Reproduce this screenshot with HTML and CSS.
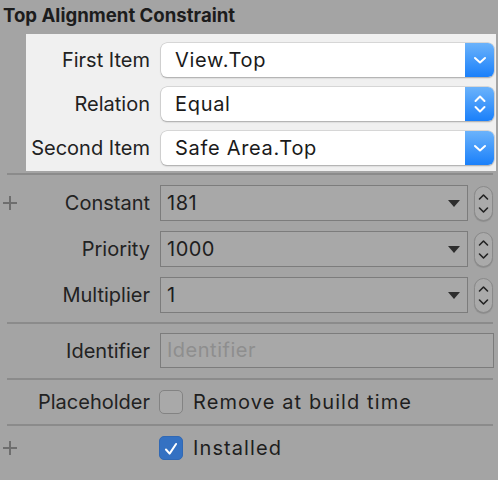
FILE: index.html
```html
<!DOCTYPE html>
<html>
<head>
<meta charset="utf-8">
<link rel="stylesheet" href="styles.css">
</head>
<body>
<div class="panel">
  <div class="title">Top Alignment Constraint</div>
  <div class="hl">
    <div class="row">
      <div class="label">First Item</div>
      <div class="popup"><span class="ptext">View.Top</span>
        <span class="pbtn"><svg width="14" height="10" viewBox="0 0 14 10"><path d="M2 3 L7 7.5 L12 3" fill="none" stroke="#fff" stroke-width="2" stroke-linecap="round" stroke-linejoin="round"/></svg></span>
      </div>
    </div>
    <div class="row">
      <div class="label">Relation</div>
      <div class="popup"><span class="ptext">Equal</span>
        <span class="pbtn"><svg width="14" height="22" viewBox="0 0 14 22"><path d="M2.5 8 L7 3.5 L11.5 8 M2.5 14 L7 18.5 L11.5 14" fill="none" stroke="#fff" stroke-width="2" stroke-linecap="round" stroke-linejoin="round"/></svg></span>
      </div>
    </div>
    <div class="row">
      <div class="label">Second Item</div>
      <div class="popup"><span class="ptext">Safe Area.Top</span>
        <span class="pbtn"><svg width="14" height="10" viewBox="0 0 14 10"><path d="M2 3 L7 7.5 L12 3" fill="none" stroke="#fff" stroke-width="2" stroke-linecap="round" stroke-linejoin="round"/></svg></span>
      </div>
    </div>
  </div>
  <div class="divider first"></div>
  <div class="group g1">
    <div class="row2 plusrow">
      <span class="plus"></span>
      <div class="label">Constant</div>
      <div class="combo"><span class="ctext">181</span><span class="tri"></span></div>
      <div class="stepper"><svg width="19" height="35" viewBox="0 0 19 35"><path d="M5.5 13 L9.5 9 L13.5 13 M5.5 22 L9.5 26 L13.5 22" fill="none" stroke="#222" stroke-width="1.6" stroke-linecap="round" stroke-linejoin="round"/></svg></div>
    </div>
    <div class="row2">
      <div class="label">Priority</div>
      <div class="combo"><span class="ctext">1000</span><span class="tri"></span></div>
      <div class="stepper"><svg width="19" height="35" viewBox="0 0 19 35"><path d="M5.5 13 L9.5 9 L13.5 13 M5.5 22 L9.5 26 L13.5 22" fill="none" stroke="#222" stroke-width="1.6" stroke-linecap="round" stroke-linejoin="round"/></svg></div>
    </div>
    <div class="row2">
      <div class="label">Multiplier</div>
      <div class="combo"><span class="ctext">1</span><span class="tri"></span></div>
      <div class="stepper"><svg width="19" height="35" viewBox="0 0 19 35"><path d="M5.5 13 L9.5 9 L13.5 13 M5.5 22 L9.5 26 L13.5 22" fill="none" stroke="#222" stroke-width="1.6" stroke-linecap="round" stroke-linejoin="round"/></svg></div>
    </div>
  </div>
  <div class="divider"></div>
  <div class="group g2">
    <div class="row2">
      <div class="label">Identifier</div>
      <div class="textfield">Identifier</div>
    </div>
  </div>
  <div class="divider"></div>
  <div class="row3">
    <div class="label">Placeholder</div>
    <span class="check"></span>
    <span class="ctext2">Remove at build time</span>
  </div>
  <div class="divider"></div>
  <div class="row3 plusrow">
    <span class="plus"></span>
    <div class="label"></div>
    <span class="check on"><svg width="24" height="24" viewBox="0 0 24 24"><path d="M6.5 12.5 L10.5 17 L17.5 6.5" fill="none" stroke="#fff" stroke-width="2.2" stroke-linecap="round" stroke-linejoin="round"/></svg></span>
    <span class="ctext2">Installed</span>
  </div>
</div>
</body>
</html>
```
FILE: styles.css
```css
html, body {
  margin: 0;
  padding: 0;
  background: #a4a4a4;
}
body {
  width: 498px;
  height: 480px;
  overflow: hidden;
  font-family: Inter, "Liberation Sans", sans-serif;
  color: #1e1e1e;
}
.panel {
  display: flex;
  flex-direction: column;
}
.title {
  height: 34px;
  box-sizing: border-box;
  padding: 3px 0 0 3px;
  font-weight: 700;
  font-size: 18.6px;
  line-height: 24px;
  color: #1c1c1c;
}
.hl {
  margin-left: 26px;
  width: 470px;
  background: #f0f0f0;
  box-sizing: border-box;
  padding: 9px 0 6px 0;
  display: flex;
  flex-direction: column;
  gap: 10px;
}
.row {
  display: flex;
  align-items: center;
  height: 34px;
}
.label {
  width: 150px;
  flex: none;
  text-align: right;
  font-size: 20px;
  margin-right: 10px;
  color: #222;
}
.hl .label {
  width: 124px;
  margin-right: 11px;
}
.popup {
  width: 333px;
  height: 34px;
  box-sizing: border-box;
  background: #fff;
  border-radius: 6px;
  box-shadow: 0 0 0 0.5px #bdbdbd, 0 1px 1.5px rgba(0,0,0,0.35);
  display: flex;
  align-items: center;
  overflow: hidden;
}
.ptext {
  flex: 1;
  padding-left: 14px;
  font-size: 20px;
  letter-spacing: 0.7px;
  color: #1a1a1a;
}
.pbtn {
  width: 29px;
  height: 100%;
  background: linear-gradient(#6bb3fb, #1a80fa);
  display: flex;
  align-items: center;
  justify-content: center;
}
.divider {
  height: 2px;
  background: #8b8b8b;
  margin: 0 5px 0 7px;
}
.divider.first {
  margin-top: 2px;
}
.group {
  display: flex;
  flex-direction: column;
  gap: 10px;
}
.g1 { padding: 10px 0 9px 0; }
.g2 { padding: 9px 0 10px 0; }
.row2 {
  display: flex;
  align-items: center;
  height: 36px;
  position: relative;
}
.g2 .row2 { height: 35px; }
.combo {
  width: 308px;
  height: 36px;
  box-sizing: border-box;
  border: 1px solid #7c7c7c;
  background: #a8a8a8;
  display: flex;
  align-items: center;
}
.ctext {
  flex: 1;
  padding-left: 6px;
  font-size: 20px;
  letter-spacing: 0.5px;
  color: #1e1e1e;
}
.tri {
  width: 0;
  height: 0;
  border-left: 6.5px solid transparent;
  border-right: 6.5px solid transparent;
  border-top: 7px solid #2e2e2e;
  margin-right: 7px;
}
.stepper {
  margin-left: 6px;
  width: 19px;
  height: 35px;
  box-sizing: border-box;
  border-radius: 10px;
  border: 1px solid #8a8a8a;
  background: #aaaaaa;
  box-shadow: 0 1px 1px rgba(0,0,0,0.15);
  display: flex;
  align-items: center;
  justify-content: center;
}
.stepper svg { flex: none; }
.textfield {
  width: 334px;
  height: 35px;
  box-sizing: border-box;
  border: 1px solid #7c7c7c;
  background: #a8a8a8;
  font-size: 20px;
  letter-spacing: 0.5px;
  color: #8e8e8e;
  padding-left: 6px;
  line-height: 33px;
}
.row3 {
  display: flex;
  align-items: center;
  height: 44px;
  position: relative;
}
.row3 .label { margin-right: 9px; }
.check {
  width: 24px;
  height: 24px;
  box-sizing: border-box;
  border-radius: 5px;
  border: 1px solid #838383;
  background: #a9a9a9;
  flex: none;
  margin-right: 10px;
  display: flex;
}
.check.on {
  background: #3471c2;
  border-color: #3068b4;
}
.ctext2 {
  font-size: 20px;
  letter-spacing: 1.1px;
  color: #1e1e1e;
}
.plus {
  position: absolute;
  left: 3px;
  top: 50%;
  width: 14px;
  height: 14px;
  margin-top: -7px;
  background:
    linear-gradient(#6e6e6e, #6e6e6e) center / 14px 2px no-repeat,
    linear-gradient(#6e6e6e, #6e6e6e) center / 2px 14px no-repeat;
}
```
